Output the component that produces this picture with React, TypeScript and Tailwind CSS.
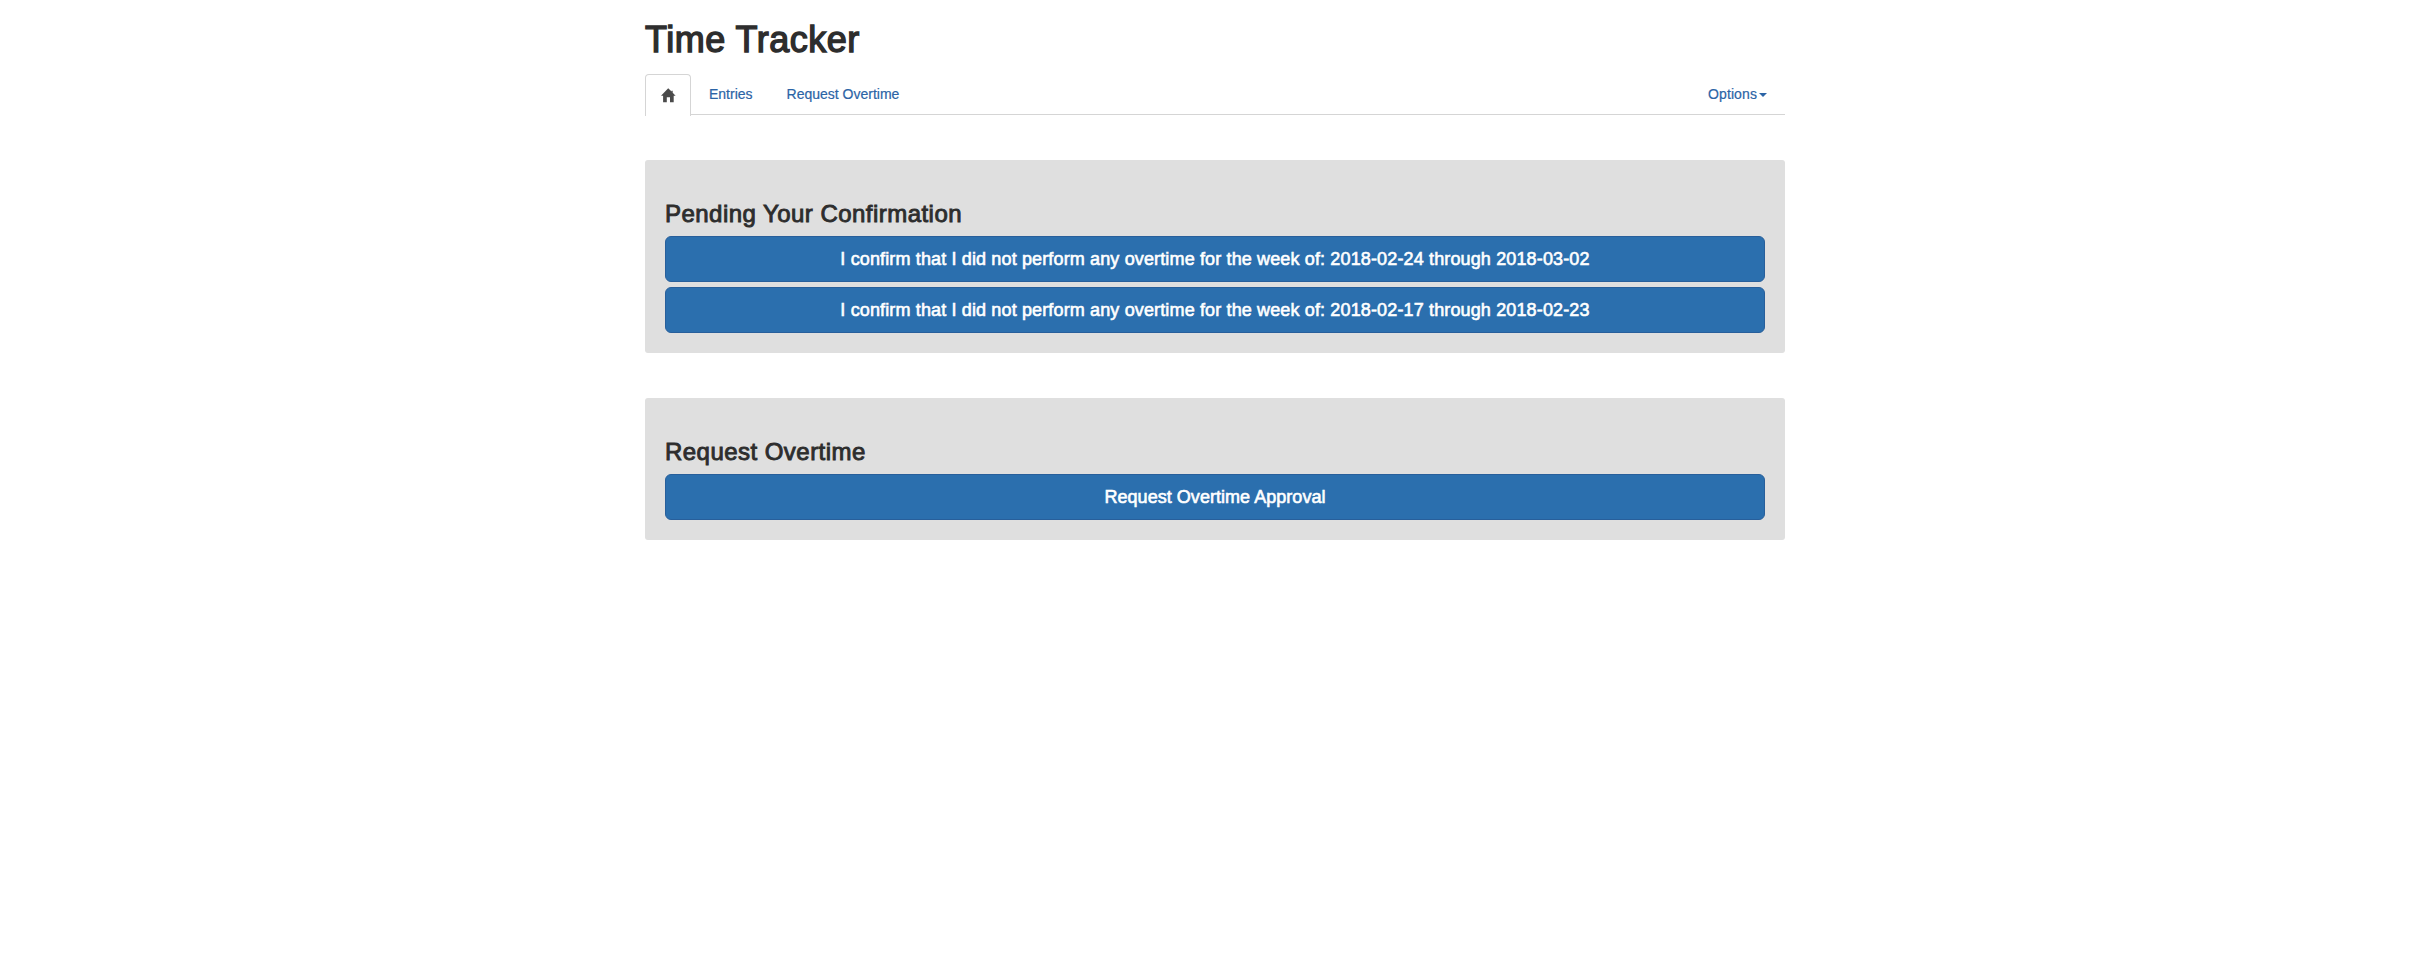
import type { ReactNode } from "react";

function HomeIcon() {
  return (
    <svg className="ml-px" width="15" height="15" viewBox="0 0 15 15" fill="currentColor" aria-hidden="true">
      <path d="M7.2 0.2 L10.6 3.5 V2.8 H11.7 V4.7 L14.6 7.7 H12.7 V14.2 H9 V9.2 H5.8 V14.2 H2.1 V7.7 H0 Z" />
    </svg>
  );
}

function Panel({ title, children }: { title: ReactNode; children: ReactNode }) {
  return (
    <section className="mb-[45px] rounded-[3px] bg-[#dfdfdf] px-5 pb-5 pt-[41px]">
      <h3 className="mb-[9px] h-[26px] text-2xl leading-[26px] tracking-[0.46px] text-[#2d2d2d] [-webkit-text-stroke:0.9px]">
        {title}
      </h3>
      <div className="flex flex-col gap-[5px]">{children}</div>
    </section>
  );
}

function BlockButton({ children, tracking = "tracking-[0.14px]" }: { children: ReactNode; tracking?: string }) {
  return (
    <button
      className={`h-[46px] w-full rounded-md border border-[#285f9b] bg-[#2b6fae] text-lg leading-6 text-white [-webkit-text-stroke:0.6px] ${tracking}`}
    >
      {children}
    </button>
  );
}

export default function App() {
  return (
    <div className="min-h-[968px] bg-white font-['Liberation_Sans',Arial,sans-serif] text-sm leading-5 text-[#2d2d2d]">
      <div className="ml-[645px] w-[1140px] pt-5">
        <h1 className="h-[54px] text-4xl leading-[40px] tracking-[0.5px] [-webkit-text-stroke:1.4px]">Time Tracker</h1>
        <nav className="mb-[45px] flex h-[41px] items-start border-b border-[#d5d5d5] text-[#2b64a6]">
          <a className="flex h-[42px] w-[46px] shrink-0 justify-center rounded-t border border-b-0 border-[#d5d5d5] bg-white pt-[13px] text-[#4b4b4b]">
            <HomeIcon />
          </a>
          <a className="ml-[18px] pt-[10px] [-webkit-text-stroke:0.2px]">Entries</a>
          <a className="ml-[34px] pt-[10px] [-webkit-text-stroke:0.2px]">Request Overtime</a>
          <a className="ml-auto mr-[18px] flex items-center gap-[2px] pt-[10px] tracking-[0.1px] [-webkit-text-stroke:0.2px]">
            Options
            <span className="mt-px border-x-4 border-t-4 border-x-transparent border-t-current" />
          </a>
        </nav>
        <Panel title="Pending Your Confirmation">
          <BlockButton>I confirm that I did not perform any overtime for the week of: 2018-02-24 through 2018-03-02</BlockButton>
          <BlockButton>I confirm that I did not perform any overtime for the week of: 2018-02-17 through 2018-02-23</BlockButton>
        </Panel>
        <Panel title="Request Overtime">
          <BlockButton tracking="tracking-[0.04px]">Request Overtime Approval</BlockButton>
        </Panel>
      </div>
    </div>
  );
}
